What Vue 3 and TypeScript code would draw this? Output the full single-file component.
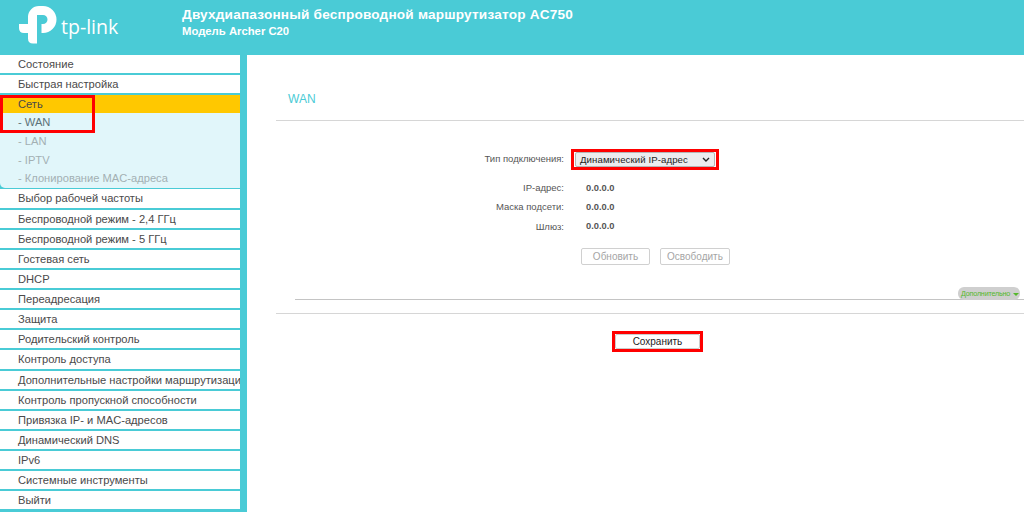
<script setup lang="ts">
interface Item { label: string; kind?: string }
const top: Item[] = [
  { label: 'Состояние' },
  { label: 'Быстрая настройка' },
  { label: 'Сеть', kind: 'active' },
]
const sub: Item[] = [
  { label: '- WAN', kind: 'cur' },
  { label: '- LAN' },
  { label: '- IPTV' },
  { label: '- Клонирование MAC-адреса' },
]
const rest: Item[] = [
  'Выбор рабочей частоты', 'Беспроводной режим - 2,4 ГГц', 'Беспроводной режим - 5 ГГц', 'Гостевая сеть', 'DHCP', 'Переадресация', 'Защита', 'Родительский контроль', 'Контроль доступа', 'Дополнительные настройки маршрутизации', 'Контроль пропускной способности', 'Привязка IP- и MAC-адресов', 'Динамический DNS', 'IPv6', 'Системные инструменты', 'Выйти',
].map((label) => ({ label }))
const info = [
  { k: 'IP-адрес:', v: '0.0.0.0' },
  { k: 'Маска подсети:', v: '0.0.0.0' },
  { k: 'Шлюз:', v: '0.0.0.0' },
]
</script>

<template>
  <div class="page">
    <header class="header">
      <div class="logo">
        <svg width="40" height="40" viewBox="18 5 40 40" class="mark">
          <path d="M28 17 A11 11 0 0 1 39 6 H43 A13.5 13.5 0 0 1 43 33 H41.5 V24 H43 A4.5 4.5 0 0 0 43 15 H37 V43.5 H33 Q28 43.5 28 38.5 V33 H24 Q19 33 19 28 V24 H28 Z" fill="#fff" />
        </svg>
        <span class="brand">tp-link</span>
      </div>
      <div class="titles">
        <div class="title">Двухдиапазонный беспроводной маршрутизатор AC750</div>
        <div class="model">Модель Archer C20</div>
      </div>
    </header>
    <div class="body">
      <nav class="side">
        <div v-for="i in top" :key="i.label" class="row" :class="i.kind">{{ i.label }}</div>
        <div class="subs">
          <div v-for="i in sub" :key="i.label" class="subrow" :class="i.kind">{{ i.label }}</div>
        </div>
        <div v-for="i in rest" :key="i.label" class="row">{{ i.label }}</div>
      </nav>
      <main class="main">
        <h1 class="wan">WAN</h1>
        <div class="form">
          <div class="line first">
            <label class="lbl">Тип подключения:</label>
            <div class="selbox">
              <div class="select">
                <span>Динамический IP-адрес</span>
                <svg width="8" height="5" viewBox="0 0 8 5"><path d="M1 1 L4 4 L7 1" fill="none" stroke="#222" stroke-width="1.4" /></svg>
              </div>
            </div>
          </div>
          <div v-for="r in info" :key="r.k" class="line info">
            <label class="lbl">{{ r.k }}</label>
            <b class="val">{{ r.v }}</b>
          </div>
          <div class="btns">
            <button class="off b1">Обновить</button>
            <button class="off b2">Освободить</button>
          </div>
        </div>
        <div class="adv">
          <span class="pill">Дополнительно <i class="tri"></i></span>
        </div>
        <div class="foot">
          <div class="savebox"><button class="save">Сохранить</button></div>
        </div>
      </main>
    </div>
  </div>
</template>

<style>
html, body { margin: 0; background: #fff; overflow: hidden; }
</style>

<style scoped>
.page { width: 1024px; height: 512px; overflow: hidden; font-family: "Liberation Sans", Arial, sans-serif; background: #fff; }
.header { height: 55px; background: #4acbd6; display: flex; color: #fff; }
.logo { width: 182px; flex: none; position: relative; }
.mark { position: absolute; left: 18px; top: 5px; }
.brand { position: absolute; left: 61px; top: 14px; font: 400 19.5px/26px "Open Sans", "Liberation Sans", sans-serif; }
.titles { padding-top: 7px; }
.title { font-size: 13.6px; font-weight: 700; line-height: 16px; letter-spacing: 0.2px; }
.model { font-size: 11.3px; font-weight: 700; line-height: 14px; margin-top: 1px; }
.body { display: flex; height: 457px; }
.side { width: 247px; flex: none; background: #4acbd6; box-sizing: border-box; padding-right: 7px; overflow: hidden; position: relative; }
.row { height: 18.13px; line-height: 18.13px; margin-bottom: 2px; background: #fff; color: #4a4a4a; font-size: 11.15px; padding-left: 18px; white-space: nowrap; overflow: hidden; }
.row.active { background: #ffc800; margin-bottom: 0; }
.subs { background: #e1f6fa; height: 75px; margin-bottom: 1px; border-bottom-left-radius: 5px; }
.subrow { height: 18.6px; line-height: 18.6px; font-size: 11.15px; color: #a3b0b3; padding-left: 18px; white-space: nowrap; }
.subrow.cur { color: #5b7278; }
.side::after { content: ""; position: absolute; left: 0; top: 40px; width: 95px; height: 38px; border: 3px solid #f00; box-sizing: border-box; }
.main { flex: 1; padding: 0 0 0 29px; box-sizing: border-box; min-width: 0; }
.wan { margin: 0; height: 66px; box-sizing: border-box; padding: 37px 0 0 12px; font-size: 12px; line-height: 15px; font-weight: 400; color: #4acbd6; border-bottom: 1px solid #d6d6d6; }
.form { height: 191px; box-sizing: border-box; padding-top: 27px; }
.line { display: flex; align-items: center; font-size: 9.5px; color: #555; }
.lbl { width: 288px; text-align: right; flex: none; }
.first { height: 22px; margin-bottom: 8px; }
.first .lbl { position: relative; top: -1px; }
.selbox { margin-left: 7px; width: 148px; height: 21px; border: 3px solid #f00; box-sizing: border-box; padding: 0 1px; }
.select { height: 15px; background: #ececee; border: 1px solid #b5b5b5; border-radius: 2px; box-sizing: border-box; display: flex; align-items: center; justify-content: space-between; padding: 0 4px; font-size: 9.6px; color: #222; letter-spacing: 0.1px; }
.info { height: 19.3px; }
.val { margin-left: 22px; font-weight: 700; color: #555; font-size: 9.3px; }
.btns { display: flex; margin: 12px 0 0 305px; gap: 10px; }
.off { height: 17px; padding: 0; background: #fff; border: 1px solid #d0d0d0; border-radius: 2px; font: 400 10px "Liberation Sans", sans-serif; color: #a5a5a5; }
.b1 { width: 69px; }
.b2 { width: 70px; }
.adv { margin-left: 19px; height: 0; border-bottom: 1px solid #c4c4c4; position: relative; margin-top: -13px; margin-bottom: 13px; }
.pill { position: absolute; right: 4px; top: -12px; height: 13px; width: 62px; background: #cfcfcf; border-radius: 6px; font-size: 7.2px; line-height: 13px; color: #54b82a; padding-left: 3px; box-sizing: border-box; white-space: nowrap; letter-spacing: -0.2px; }
.tri { display: inline-block; border: 3px solid transparent; border-top: 3px solid #54b82a; border-bottom: 0; margin-left: 1px; vertical-align: middle; }
.foot { border-top: 1px solid #d6d6d6; display: flex; }
.savebox { margin: 17px 0 0 336px; width: 91px; height: 21px; border: 3px solid #f00; box-sizing: border-box; }
.save { width: 100%; height: 100%; display: block; padding: 0; background: #fff; border: 1px solid #ccc; border-radius: 2px; font: 400 10px "Liberation Sans", sans-serif; color: #222; }
</style>
